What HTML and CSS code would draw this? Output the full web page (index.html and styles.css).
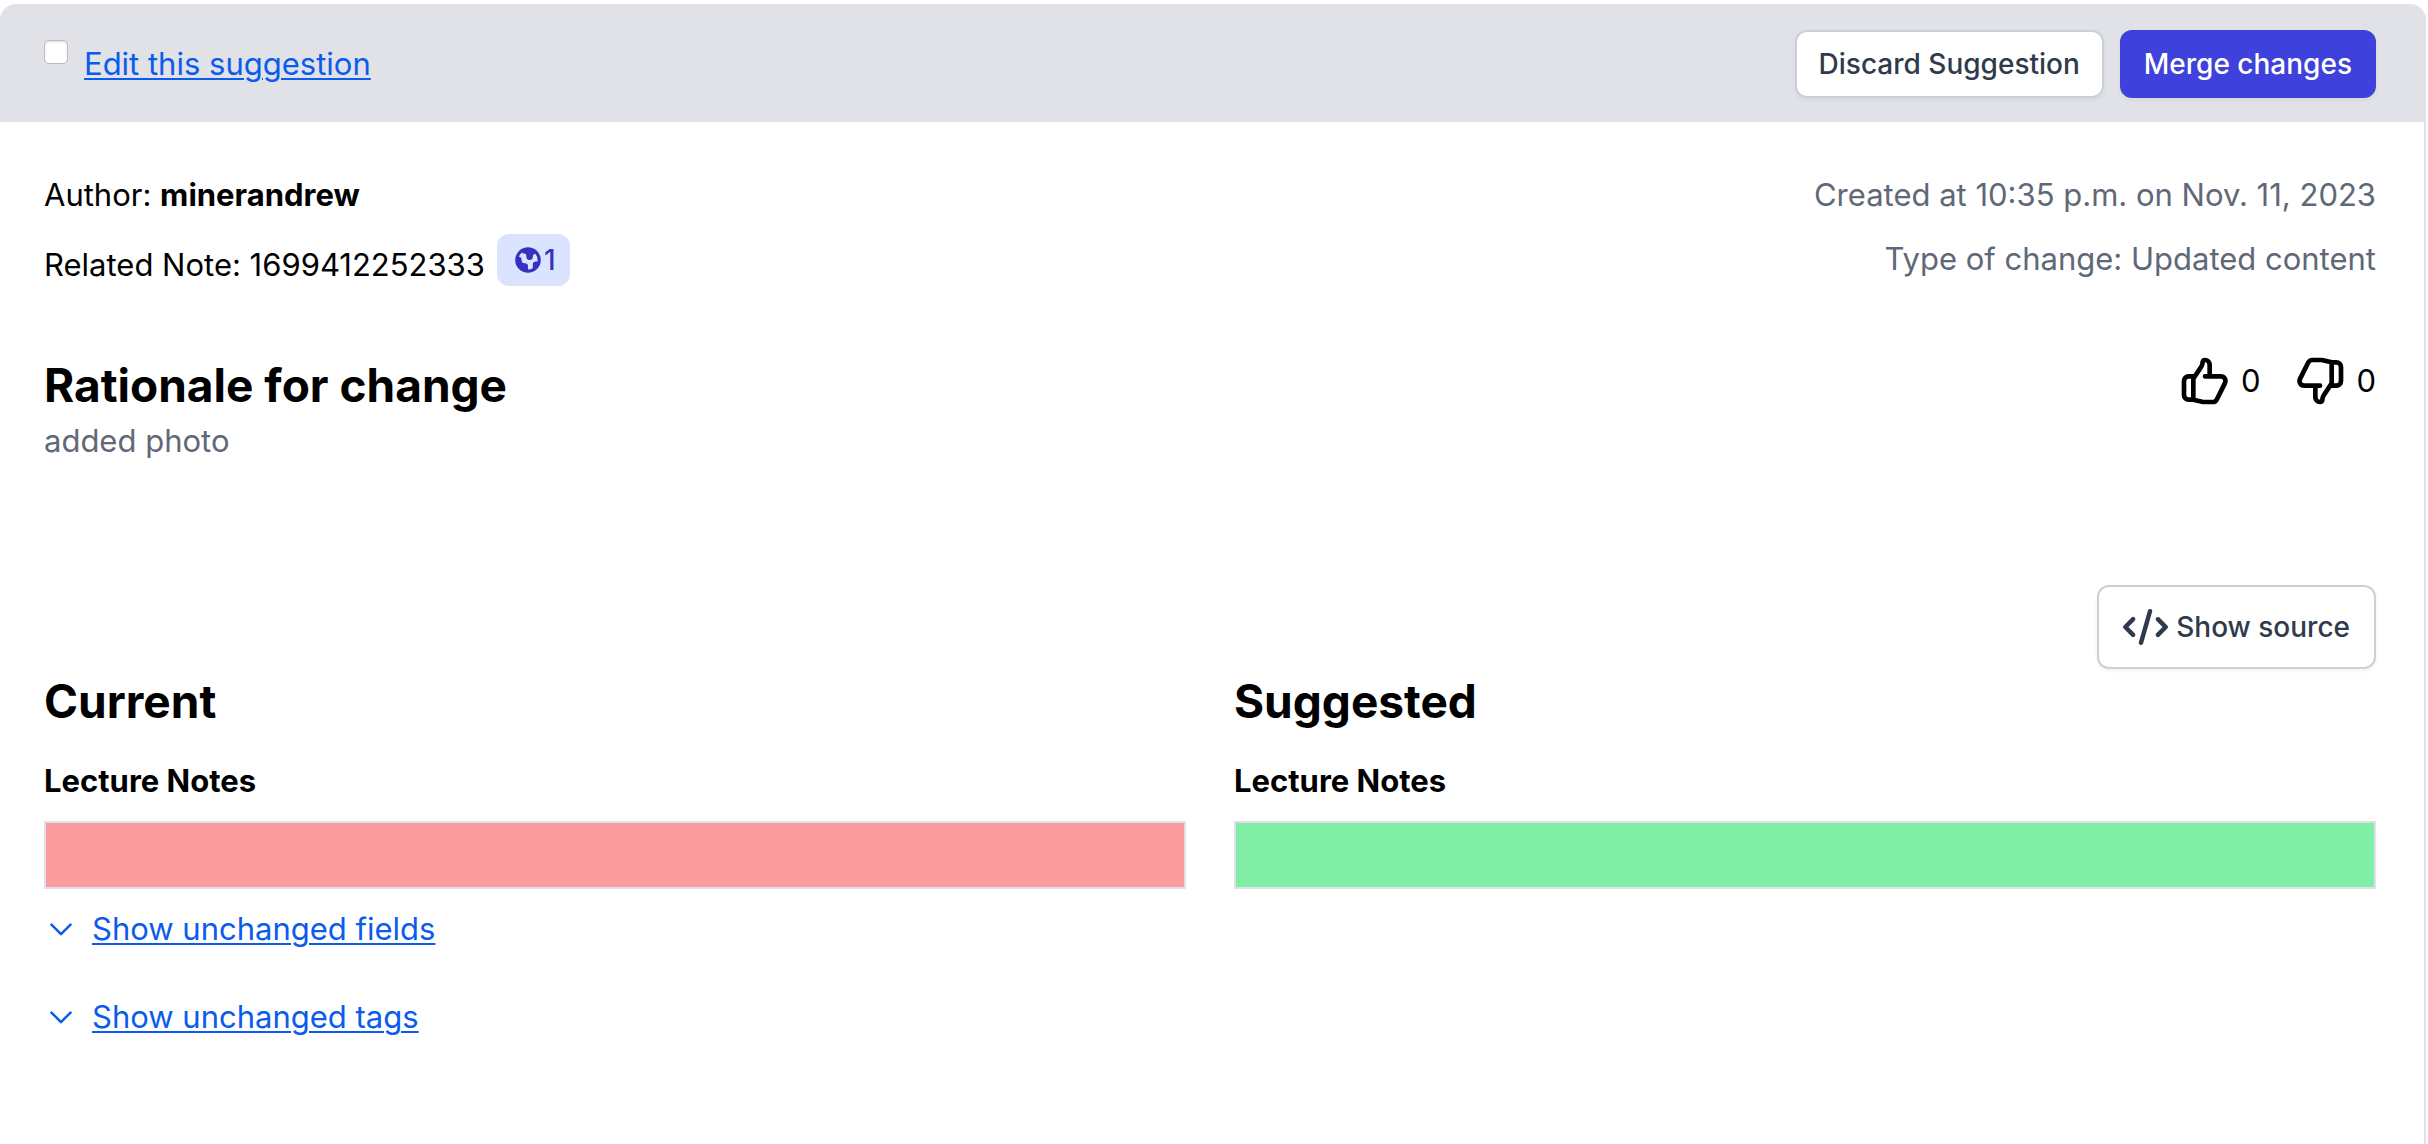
FILE: index.html
```html
<!DOCTYPE html>
<html lang="en">
<head>
<meta charset="utf-8">
<title>Suggestion</title>
<link rel="stylesheet" href="styles.css">
</head>
<body>
<article class="card">
  <header class="toolbar">
    <div class="edit">
      <input class="check" type="checkbox" aria-label="Select this suggestion">
      <a class="link" href="#">Edit this suggestion</a>
    </div>
    <div class="actions">
      <button class="btn" type="button">Discard Suggestion</button>
      <button class="btn btn-primary" type="button">Merge changes</button>
    </div>
  </header>
  <div class="content">
    <section class="meta">
      <div>
        <p class="line">Author: <strong>minerandrew</strong></p>
        <p class="line note">Related Note: 1699412252333
          <span class="badge"><svg width="32" height="32" viewBox="0 0 20 20" fill="currentColor" aria-hidden="true"><path fill-rule="evenodd" clip-rule="evenodd" d="M10 18a8 8 0 100-16 8 8 0 000 16zM4.332 8.027a6.012 6.012 0 011.912-2.706C6.512 5.73 6.974 6 7.5 6A1.5 1.5 0 019 7.5V8a2 2 0 004 0 2 2 0 011.523-1.943A5.977 5.977 0 0116 10c0 .34-.028.675-.083 1H15a2 2 0 00-2 2v2.197A5.973 5.973 0 0110 16v-2a2 2 0 00-2-2 2 2 0 01-2-2 2 2 0 00-1.668-1.973z"/></svg>1</span>
        </p>
      </div>
      <div class="details">
        <p class="line">Created at 10:35 p.m. on Nov. 11, 2023</p>
        <p class="line">Type of change: Updated content</p>
      </div>
    </section>
    <section class="rationale">
      <div>
        <h2 class="title">Rationale for change</h2>
        <p class="reason">added photo</p>
      </div>
      <div class="votes">
        <button class="vote" type="button" aria-label="Like"><svg width="56" height="56" viewBox="0 0 24 24" fill="none" stroke="currentColor" stroke-width="2" stroke-linecap="round" stroke-linejoin="round" aria-hidden="true"><path d="M14 10h4.764a2 2 0 011.789 2.894l-3.5 7A2 2 0 0115.263 21h-4.017c-.163 0-.326-.02-.485-.06L7 20m7-10V5a2 2 0 00-2-2h-.095c-.5 0-.905.405-.905.905 0 .714-.211 1.412-.608 2.006L7 11v9m7-10h-2M7 20H5a2 2 0 01-2-2v-6a2 2 0 012-2h2.5"/></svg>0</button>
        <button class="vote" type="button" aria-label="Dislike"><svg width="56" height="56" viewBox="0 0 24 24" fill="none" stroke="currentColor" stroke-width="2" stroke-linecap="round" stroke-linejoin="round" aria-hidden="true"><path d="M10 14H5.236a2 2 0 01-1.789-2.894l3.5-7A2 2 0 018.736 3h4.018a2 2 0 01.485.06l3.76.94m-7 10v5a2 2 0 002 2h.096c.5 0 .905-.405.905-.904 0-.715.211-1.413.608-2.008L17 13V4m-7 10h2m5-10h2a2 2 0 012 2v6a2 2 0 01-2 2h-2.5"/></svg>0</button>
      </div>
    </section>
    <div class="source">
      <button class="btn btn-source" type="button"><svg width="45" height="36" viewBox="0 0 640 512" fill="currentColor" aria-hidden="true"><path d="M392.800 1.200c-17-4.900-34.700 5-39.600 22l-128 448c-4.900 17 5 34.700 22 39.600s34.700-5 39.600-22l128-448c4.900-17-5-34.700-22-39.600zm80.600 120.100c-12.500 12.500-12.500 32.800 0 45.300L562.700 256l-89.400 89.400c-12.500 12.500-12.500 32.800 0 45.300s32.800 12.500 45.300 0l112-112c12.500-12.500 12.500-32.800 0-45.300l-112-112c-12.500-12.500-32.800-12.500-45.300 0zm-306.700 0c-12.500-12.500-32.800-12.500-45.300 0l-112 112c-12.500 12.500-12.500 32.800 0 45.300l112 112c12.500 12.500 32.800 12.500 45.300 0s12.500-32.800 0-45.300L77.300 256l89.400-89.400c12.500-12.500 12.500-32.800 0-45.300z"/></svg>Show source</button>
    </div>
    <section class="compare">
      <div>
        <h2 class="title">Current</h2>
        <h3 class="field">Lecture Notes</h3>
        <div class="diff removed"></div>
      </div>
      <div>
        <h2 class="title">Suggested</h2>
        <h3 class="field">Lecture Notes</h3>
        <div class="diff added"></div>
      </div>
    </section>
    <nav class="toggles">
      <a class="toggle" href="#"><svg width="34" height="34" viewBox="0 0 16 16" fill="none" stroke="currentColor" stroke-width="1.2" stroke-linecap="round" stroke-linejoin="round" aria-hidden="true"><path d="M3.500 5.900l4.500 4.500 4.500-4.500"/></svg><span class="link">Show unchanged fields</span></a>
      <a class="toggle" href="#"><svg width="34" height="34" viewBox="0 0 16 16" fill="none" stroke="currentColor" stroke-width="1.2" stroke-linecap="round" stroke-linejoin="round" aria-hidden="true"><path d="M3.500 5.900l4.500 4.500 4.500-4.500"/></svg><span class="link">Show unchanged tags</span></a>
    </nav>
  </div>
</article>
</body>
</html>
```
FILE: styles.css
```css
* {
  box-sizing: border-box;
}

body {
  margin: 0;
  padding: 4px 2px 0 0;
  background: #fff;
  color: #000;
  font-family: Inter, "Liberation Sans", sans-serif;
  font-size: 31px;
  line-height: 48px;
}

h2, h3, p {
  margin: 0;
}

svg {
  flex: none;
}

.card {
  min-height: calc(100vh - 4px);
  border-right: 2px solid #e1e2e8;
  border-radius: 16px 16px 0 0;
}

.toolbar {
  display: flex;
  justify-content: space-between;
  align-items: flex-start;
  margin-right: -2px;
  padding: 26px 50px 24px 44px;
  background: #e1e2e8;
  border-radius: 16px 16px 0 0;
}

.edit {
  display: flex;
  align-items: flex-start;
  gap: 16px;
  padding-top: 10px;
}

.check {
  appearance: none;
  width: 24px;
  height: 24px;
  margin: 0;
  border: 1px solid #bbbcc0;
  border-radius: 5px;
  background: #fff;
  box-shadow: inset 0 1px 2px #0002;
}

.link {
  color: #0b5cec;
  text-decoration: underline;
  text-decoration-thickness: 2px;
  text-underline-offset: 3px;
}

.actions {
  display: flex;
  gap: 16px;
}

.btn {
  display: flex;
  align-items: center;
  gap: 8px;
  padding: 12px 22px;
  border: 2px solid #cbd0d8;
  border-radius: 12px;
  background: #fff;
  color: #2f3a4b;
  font: 500 28px/40px Inter, "Liberation Sans", sans-serif;
  box-shadow: 0 2px 4px #0000000d;
}

.btn-primary {
  border-color: #3f41dc;
  background: #3f41dc;
  color: #fff;
}

.btn-source {
  padding: 20px 24px;
}

.content {
  padding: 49px 48px 48px 44px;
}

.meta {
  display: flex;
  justify-content: space-between;
  align-items: flex-start;
}

.line + .line {
  margin-top: 16px;
}

.note {
  display: flex;
  gap: 12px;
  padding-top: 6px;
}

.badge {
  display: flex;
  align-items: center;
  height: 52px;
  margin-top: -7px;
  padding: 0 14px 0 15px;
  border-radius: 12px;
  background: #dbe4fe;
  color: #3432c0;
  font-size: 28px;
  font-weight: 500;
}

.details {
  text-align: right;
  color: #606877;
}

.rationale {
  display: flex;
  justify-content: space-between;
  align-items: flex-start;
  margin-top: 64px;
}

.title {
  font-size: 46px;
  font-weight: 700;
  line-height: 64px;
}

.reason {
  color: #606877;
}

.votes {
  display: flex;
  gap: 32px;
}

.vote {
  display: flex;
  align-items: center;
  gap: 8px;
  padding: 0;
  border: 0;
  background: none;
  color: #000;
  font: inherit;
}

.source {
  display: flex;
  justify-content: flex-end;
  margin-top: 120px;
}

.compare {
  display: grid;
  grid-template-columns: 1fr 1fr;
  gap: 48px;
}

.field {
  margin: 24px 0 16px;
  font-size: 31px;
  font-weight: 700;
}

.diff {
  height: 68px;
  border: 2px solid #dfe1e6;
}

.removed {
  background: #fc9b9b;
}

.added {
  background: #80eea6;
}

.toggles {
  display: flex;
  flex-direction: column;
  align-items: flex-start;
  gap: 40px;
  margin-top: 16px;
}

.toggle {
  display: flex;
  align-items: center;
  gap: 14px;
  color: #0b5cec;
  text-decoration: none;
}
```
